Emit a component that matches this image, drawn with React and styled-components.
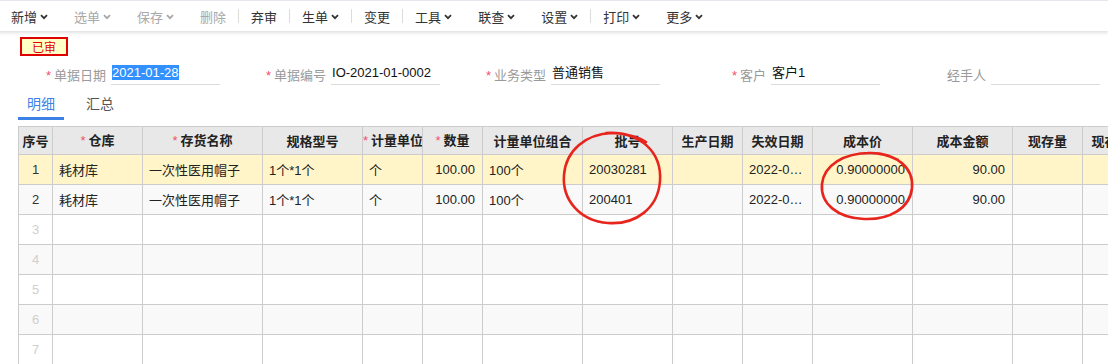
import React from "react";
import styled, { createGlobalStyle } from "styled-components";

const GlobalStyle = createGlobalStyle`
  html, body {
    margin: 0;
    padding: 0;
    background: #fff;
    font-family: "Liberation Sans", "Noto Sans CJK SC", sans-serif;
    font-size: 13px;
    color: #333;
  }
`;

const toolItems = [
  { label: "新增", chevron: true },
  { label: "选单", chevron: true, disabled: true },
  { label: "保存", chevron: true, disabled: true },
  { label: "删除", disabled: true },
  { sep: true },
  { label: "弃审" },
  { sep: true },
  { label: "生单", chevron: true },
  { sep: true },
  { label: "变更" },
  { sep: true },
  { label: "工具", chevron: true },
  { label: "联查", chevron: true },
  { label: "设置", chevron: true },
  { sep: true },
  { label: "打印", chevron: true },
  { label: "更多", chevron: true },
];

const fields = [
  { label: "单据日期", value: "2021-01-28", required: true, selected: true },
  { label: "单据编号", value: "IO-2021-01-0002", required: true },
  { label: "业务类型", value: "普通销售", required: true },
  { label: "客户", value: "客户1", required: true },
  { label: "经手人", value: "" },
];

const columns = [
  { title: "序号", width: 34 },
  { title: "仓库", width: 90, required: true },
  { title: "存货名称", width: 120, required: true },
  { title: "规格型号", width: 100 },
  { title: "计量单位", width: 60, required: true },
  { title: "数量", width: 60, required: true, align: "right" },
  { title: "计量单位组合", width: 100 },
  { title: "批号", width: 90 },
  { title: "生产日期", width: 70 },
  { title: "失效日期", width: 70 },
  { title: "成本价", width: 100, align: "right" },
  { title: "成本金额", width: 100, align: "right" },
  { title: "现存量", width: 70 },
  { title: "现存件数", width: 70 },
];

const rows = [
  ["耗材库", "一次性医用帽子", "1个*1个", "个", "100.00", "100个", "20030281", "", "2022-01-27", "0.90000000", "90.00", "", ""],
  ["耗材库", "一次性医用帽子", "1个*1个", "个", "100.00", "100个", "200401", "", "2022-03-31", "0.90000000", "90.00", "", ""],
];

const Chevron = () => (
  <svg width="8" height="6" viewBox="0 0 8 6">
    <path d="M1 1.2 L4 4.2 L7 1.2" fill="none" stroke="currentColor" strokeWidth="1.8" />
  </svg>
);

const App = () => {
  return (
    <Page>
      <GlobalStyle />
      <Toolbar>
        {toolItems.map((item, i) =>
          item.sep ? (
            <ToolSep key={i} />
          ) : (
            <ToolItem key={i} $disabled={item.disabled}>
              {item.label}
              {item.chevron && <Chevron />}
            </ToolItem>
          )
        )}
      </Toolbar>

      <StatusTag>已审</StatusTag>

      <FormRow>
        {fields.map((f, i) => (
          <Field key={i}>
            <FieldLabel>
              {f.required && <Star>*</Star>}
              {f.label}
            </FieldLabel>
            <FieldInput>
              {f.selected ? <Selected>{f.value}</Selected> : f.value}
            </FieldInput>
          </Field>
        ))}
      </FormRow>

      <Tabs>
        <Tab $active>明细</Tab>
        <Tab>汇总</Tab>
      </Tabs>

      <GridWrap>
        <Grid>
          <colgroup>
            {columns.map((c, i) => (
              <col key={i} style={{ width: c.width }} />
            ))}
          </colgroup>
          <thead>
            <tr>
              {columns.map((c, i) => (
                <HeadCell key={i}>
                  {c.required && <Star>*</Star>}
                  {c.title}
                </HeadCell>
              ))}
            </tr>
          </thead>
          <tbody>
            {[0, 1, 2, 3, 4, 5, 6].map((r) => {
              const data = rows[r];
              return (
                <Row key={r} $highlight={r === 0} $striped={r % 2 === 1}>
                  <IndexCell $empty={!data}>{r + 1}</IndexCell>
                  {columns.slice(1).map((c, ci) => (
                    <Cell key={ci} $align={c.align}>
                      {data ? data[ci] : ""}
                    </Cell>
                  ))}
                </Row>
              );
            })}
          </tbody>
        </Grid>
      </GridWrap>

      <Marks width="1108" height="364" viewBox="0 0 1108 364">
        <path
          d="M606 133 C640 131 662 152 660 181 C658 208 636 225 608 223 C580 221 562 200 564 175 C566 150 586 134 612 133 C626 133 640 138 646 142"
          fill="none"
          stroke="#e8251d"
          strokeWidth="2.6"
          strokeLinecap="round"
        />
        <path
          d="M868 153 C896 152 914 168 912 188 C910 208 890 220 864 219 C838 218 820 204 822 184 C824 165 844 153 870 153 C882 153 892 157 898 160"
          fill="none"
          stroke="#e8251d"
          strokeWidth="2.6"
          strokeLinecap="round"
        />
      </Marks>
    </Page>
  );
};

const Page = styled.div`
  position: relative;
  width: 1108px;
  height: 364px;
  overflow: hidden;
`;

const Toolbar = styled.div`
  display: flex;
  align-items: center;
  height: 30px;
  border-top: 1px solid #e4e7ee;
  box-shadow: 0 2px 3px rgba(0, 0, 0, 0.12);
  margin-left: -2px;
`;

const ToolItem = styled.div`
  display: flex;
  align-items: center;
  gap: 3px;
  padding: 0 13px;
  font-size: 13px;
  color: ${(p) => (p.$disabled ? "#a8a8a8" : "#333")};
  font-family: "Noto Sans CJK SC", sans-serif;
  svg {
    margin-top: 1px;
  }
`;

const ToolSep = styled.div`
  width: 1px;
  height: 14px;
  margin: 0 -1px;
  background: #dcdcdc;
`;

const StatusTag = styled.div`
  margin: 6px 0 0 20px;
  width: 44px;
  height: 15px;
  border: 2px solid #e00000;
  background: #ffffc6;
  color: #e00000;
  font-size: 12px;
  line-height: 15px;
  text-align: center;
  font-family: "Noto Sans CJK SC", sans-serif;
`;

const FormRow = styled.div`
  display: flex;
  margin-top: 7px;
`;

const Field = styled.div`
  display: flex;
  align-items: center;
  width: 220px;
  flex-shrink: 0;
`;

const FieldLabel = styled.div`
  width: 110px;
  text-align: right;
  color: #9a9a9a;
  font-size: 13px;
  font-family: "Noto Sans CJK SC", sans-serif;
`;

const Star = styled.span`
  color: #f0506e;
  margin-right: 3px;
  font-family: "Liberation Sans", sans-serif;
  font-weight: normal;
`;

const FieldInput = styled.div`
  margin-left: 5px;
  width: 113px;
  height: 22px;
  line-height: 20px;
  box-sizing: border-box;
  border-bottom: 1px solid #dcdcdc;
  color: #111;
  font-size: 13px;
  padding-left: 1px;
  white-space: nowrap;
  overflow: hidden;
`;

const Selected = styled.span`
  background: #3390ff;
  color: #fff;
`;

const Tabs = styled.div`
  display: flex;
  margin: 6px 0 0 18px;
`;

const Tab = styled.div`
  padding: 0 9px;
  margin-right: 13px;
  height: 26px;
  line-height: 24px;
  font-size: 14px;
  font-family: "Noto Sans CJK SC", sans-serif;
  color: ${(p) => (p.$active ? "#3b82e4" : "#555")};
  border-bottom: 3px solid ${(p) => (p.$active ? "#3b82e4" : "transparent")};
`;

const GridWrap = styled.div`
  margin: 6px 0 0 18px;
  overflow: hidden;
`;

const Grid = styled.table`
  border-collapse: collapse;
  table-layout: fixed;
  width: 1134px;
  font-size: 13px;

  thead tr {
    height: 28px;
  }
`;

const HeadCell = styled.th`
  background: #e8e8e8;
  border: 1px solid #cccccc;
  font-weight: bold;
  color: #222;
  padding: 0;
  line-height: 18px;
  text-align: center;
  white-space: nowrap;
  overflow: hidden;
  font-family: "Noto Sans CJK SC", sans-serif;
`;

const Row = styled.tr`
  height: 30px;
  background: ${(p) => (p.$highlight ? "#fff5c9" : p.$striped ? "#f9f9f9" : "#ffffff")};
`;

const Cell = styled.td`
  border: 1px solid #cccccc;
  padding: 0 7px 0 6px;
  text-align: ${(p) => p.$align || "left"};
  color: #222;
  white-space: nowrap;
  overflow: hidden;
  text-overflow: ellipsis;
`;

const IndexCell = styled.td`
  border: 1px solid #cccccc;
  text-align: center;
  padding: 0;
  color: ${(p) => (p.$empty ? "#cfcfcf" : "#333")};
`;

const Marks = styled.svg`
  position: absolute;
  left: 0;
  top: 0;
  pointer-events: none;
`;

export default App;
